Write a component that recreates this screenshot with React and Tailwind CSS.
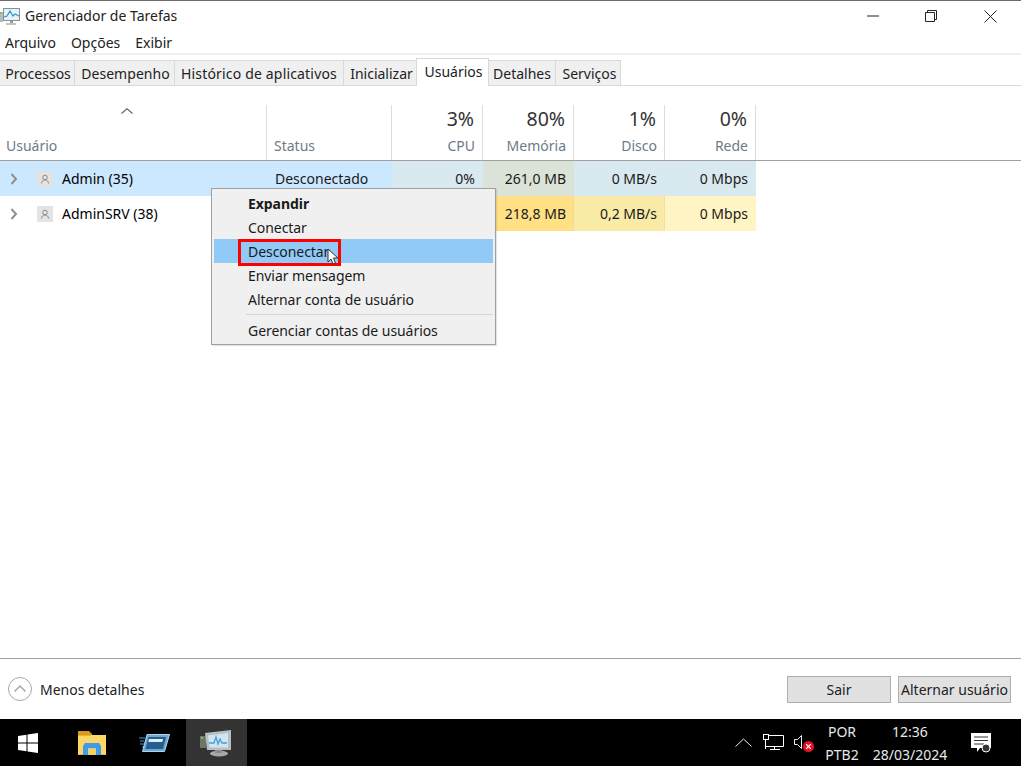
import React from "react";

const tabs = [
  ["Processos", "w-[75px] pl-[2px]"],
  ["Desempenho", "w-[100px] pl-[2px] tracking-[0.05px]"],
  ["Histórico de aplicativos", "w-[169px] tracking-[0.17px]"],
  ["Inicializar", "w-[73px] pl-[3px]"],
];

function UserIcon() {
  return (
    <span className="w-4 h-4 bg-[#e3e3e3] flex items-center justify-center">
      <svg width="10" height="10" viewBox="0 0 10 10" fill="none" stroke="#8a8a8a" strokeWidth="1">
        <circle cx="5" cy="3.5" r="2.3" />
        <path d="M1.5 9.5c0-2 1.5-3.5 3.5-3.5s3.500 1.500 3.500 3.500" />
      </svg>
    </span>
  );
}

function Chevron() {
  return (
    <svg width="8" height="12" viewBox="0 0 8 12" fill="none" stroke="#8f8f8f" strokeWidth="2">
      <path d="M1.500 1l4.500 5-4.500 5" />
    </svg>
  );
}

function HeadCol({ pct, label }) {
  return (
    <div className="w-[91px] border-r border-[#dcdcdc] flex flex-col items-end pr-[7px]">
      <div className="text-[19.5px] leading-[26px] text-[#333] mt-[1px] mr-[1px]">{pct}</div>
      <div className="text-[14px] leading-[20px] text-[#6d7a88] mt-[4px]">{label}</div>
    </div>
  );
}

function Cell({ bg, border, children }) {
  return (
    <div className={`w-[91px] h-full flex items-center justify-end pr-[7px] text-[14px] border-r ${bg} ${border}`}>
      {children}
    </div>
  );
}

function Row({ bg, name, status, cells }) {
  return (
    <div className="h-[35px] flex items-stretch">
      <div className={`w-[267px] flex items-center ${bg}`}>
        <span className="ml-[10px] w-[8px] flex"><Chevron /></span>
        <span className="ml-[19px]"><UserIcon /></span>
        <span className="ml-[9px] text-[14px] text-black">{name}</span>
      </div>
      <div className={`w-[125px] flex items-center pl-[8px] text-[14px] ${bg}`}>{status}</div>
      {cells.map((c, i) => (
        <Cell key={i} bg={c[0]} border={c[1]}>{c[2]}</Cell>
      ))}
    </div>
  );
}

function MenuItem({ children, bold, active }) {
  return (
    <div className={`h-[24px] flex items-center pl-[34px] text-[14px] tracking-[-0.06px] ${bold ? "font-bold" : ""} ${active ? "bg-[#91c9f7]" : ""}`}>
      {children}
    </div>
  );
}

function FolderIcon() {
  return (
    <svg width="28" height="24" viewBox="0 0 28 24">
      <path d="M0 1C0 .4.400 0 1 0h10l3 3v3H0z" fill="#d99a1c" />
      <rect x="0" y="4" width="28" height="20" fill="#fcd667" />
      <rect x="0" y="4" width="13" height="1" fill="#e8b23a" />
      <rect x="0" y="23" width="28" height="1" fill="#e6b53d" />
      <path d="M5 24v-9l2-3h14l2 3v9h-5v-6.500h-8V24z" fill="#3d9be9" />
      <rect x="10" y="17.500" width="8" height="6.500" fill="#f3cf6a" />
    </svg>
  );
}

function ServerIcon() {
  return (
    <svg width="31" height="18" viewBox="0 0 31 18">
      <path d="M0 4h6M1 7h4M1 10h4M3 13h2" stroke="#4f9ad6" strokeWidth="1" />
      <path d="M8 .5h22.500L25.500 17.500H3.500z" fill="#6fa9d0" stroke="#a8d5f0" strokeWidth="1" />
      <path d="M9.500 3H27l-3 12H6.500z" fill="#255d8f" />
      <path d="M10 5h14l-.7 3H9.300z" fill="#dceef9" />
    </svg>
  );
}

function TaskMgrBar() {
  return (
    <svg width="33" height="27" viewBox="0 0 33 27">
      <rect x="0" y="6" width="6" height="12" fill="#6d7468" />
      <rect x="1" y="7" width="2" height="2" fill="#79c257" />
      <ellipse cx="19" cy="23.500" rx="9" ry="3" fill="#a9a9a9" />
      <rect x="15" y="19" width="7" height="4" fill="#8c8c8c" />
      <path d="M5 3l26-3v20H7z" fill="#b9bec1" />
      <path d="M8 5.500l20-2.500v14.500H9.500z" fill="#cfe6f2" />
      <path d="M9 13h5l2-6 2 7 2-5 2 4h5" fill="none" stroke="#4b9fd2" strokeWidth="1.300" />
    </svg>
  );
}

function TaskMgrTitle() {
  return (
    <svg width="20" height="17" viewBox="0 0 20 17">
      <rect x="0" y="4" width="3" height="10" fill="#b9bdb8" />
      <rect x="0" y="4" width="2" height="2" fill="#79c257" />
      <rect x="3" y="0" width="17" height="13" fill="#8b8f92" />
      <rect x="4" y="1" width="15" height="11" fill="#e4f3fb" />
      <path d="M4 9l3-1 3-5 3 5 2-2 4 2" fill="none" stroke="#3c93c9" strokeWidth="1.200" />
      <rect x="10" y="13" width="3" height="2" fill="#9a9a9a" />
      <rect x="6" y="15" width="10" height="2" fill="#c4c4c4" />
    </svg>
  );
}

export default function App() {
  return (
    <div className="w-[1021px] h-[766px] overflow-hidden bg-white flex flex-col relative font-['Noto_Sans','Open_Sans',sans-serif] text-[#1a1a1a]">
      <div className="h-[1px] bg-[#6b6b6b] shrink-0" />
      {/* title bar */}
      <div className="h-[30px] shrink-0 flex items-center">
        <span className="flex mr-[5px]"><TaskMgrTitle /></span>
        <span className="text-[14px] text-[#222] mb-[1px]">Gerenciador de Tarefas</span>
        <div className="ml-auto flex items-center">
          <svg width="12" height="2" viewBox="0 0 12 2" className="mr-[46px]"><path d="M0 1h12" stroke="#222" /></svg>
          <svg width="12" height="12" viewBox="0 0 12 12" fill="none" stroke="#222" className="mr-[47px]">
            <path d="M.5 2.500h9v9h-9zM2.500 2.500v-2h9v9h-2" />
          </svg>
          <svg width="13" height="13" viewBox="0 0 13 13" fill="none" stroke="#222" className="mr-[24px]">
            <path d="M.5.5l12 12M12.500.5l-12 12" />
          </svg>
        </div>
      </div>
      {/* menu */}
      <div className="h-[22px] shrink-0 flex items-center pl-[5px] gap-[15px] text-[14px] text-[#222]">
        <span>Arquivo</span><span>Opções</span><span>Exibir</span>
      </div>
      <div className="h-[2px] bg-[#f0f0f0] shrink-0" />
      {/* tabs */}
      <div className="h-[28px] mt-[3px] shrink-0 flex items-end border-b border-[#d9d9d9]">
        {tabs.map(([t, w]) => (
          <div key={t} className={`${w} h-[25px] bg-[#f0f0f0] border-t border-r border-[#d9d9d9] flex items-center justify-center text-[14px] text-[#222]`}>{t}</div>
        ))}
        <div className="w-[73px] h-[28px] mb-[-1px] bg-white border border-b-0 border-[#d9d9d9] flex items-start pt-[2px] pl-[2px] justify-center text-[14px] text-[#222] ml-[-1px]">Usuários</div>
        <div className="w-[67px] h-[25px] bg-[#f0f0f0] border-t border-r border-[#d9d9d9] flex items-center justify-center text-[14px] text-[#222]">Detalhes</div>
        <div className="w-[65px] h-[25px] bg-[#f0f0f0] border-t border-r border-[#d9d9d9] flex items-center justify-center pl-[3px] text-[14px] text-[#222]">Serviços</div>
      </div>
      {/* table header */}
      <div className="h-[55px] mt-[19px] shrink-0 flex">
        <div className="w-[267px] border-r border-[#dcdcdc] relative flex items-end pl-[6px] pb-[4px] text-[14px] text-[#6d7a88]">
          Usuário
          <svg width="12" height="6" viewBox="0 0 12 6" fill="none" stroke="#5a6b80" strokeWidth="1.200" className="absolute left-[121px] top-[3px]">
            <path d="M.5 5.500L6 .8l5.500 4.700" />
          </svg>
        </div>
        <div className="w-[125px] border-r border-[#dcdcdc] flex items-end pl-[7px] pb-[4px] text-[14px] text-[#6d7a88]">Status</div>
        <HeadCol pct="3%" label="CPU" />
        <HeadCol pct="80%" label="Memória" />
        <HeadCol pct="1%" label="Disco" />
        <HeadCol pct="0%" label="Rede" />
      </div>
      <div className="h-[1px] bg-[#a0a0a0] shrink-0" />
      {/* rows */}
      <div className="flex-1 min-h-0">
        <Row
          bg="bg-[#cce8ff]"
          name="Admin (35)"
          status="Desconectado"
          cells={[
            ["bg-[#d8e9ef]", "border-[#d8e9ef]", "0%"],
            ["bg-[#dbe3d8]", "border-[#dbe3d8]", "261,0 MB"],
            ["bg-[#d8e9ef]", "border-[#d8e9ef]", "0 MB/s"],
            ["bg-[#d8e9ef]", "border-[#d8e9ef]", "0 Mbps"],
          ]}
        />
        <Row
          bg="bg-white"
          name="AdminSRV (38)"
          status=""
          cells={[
            ["bg-[#fff4c4]", "border-[#f3e6a8]", ""],
            ["bg-[#ffe084]", "border-[#f1d893]", "218,8 MB"],
            ["bg-[#f9eba6]", "border-[#f1e0a0]", "0,2 MB/s"],
            ["bg-[#fff4c4]", "border-[#fff4c4]", "0 Mbps"],
          ]}
        />
      </div>
      {/* footer */}
      <div className="h-[61px] shrink-0 border-t border-[#a0a0a0] flex items-center">
        <svg width="24" height="24" viewBox="0 0 24 24" fill="none" className="ml-[8px]">
          <circle cx="12" cy="12" r="11.500" stroke="#a8a8a8" />
          <path d="M6.500 14.500L12 9l5.500 5.500" stroke="#a8a8a8" strokeWidth="1.500" />
        </svg>
        <span className="ml-[8px] text-[14px] text-[#222]">Menos detalhes</span>
        <div className="ml-auto flex gap-[7px] mr-[10px]">
          <button className="w-[104px] h-[27px] bg-[#e1e1e1] border border-[#adadad] text-[14px] text-[#222]">Sair</button>
          <button className="w-[113px] h-[27px] bg-[#e1e1e1] border border-[#adadad] text-[14px] text-[#222]">Alternar usuário</button>
        </div>
      </div>
      {/* taskbar */}
      <div className="h-[47px] shrink-0 bg-black flex items-center text-white">
        <svg width="20" height="20" viewBox="0 0 20 20" fill="#fff" className="ml-[18px]">
          <path d="M0 3l8.500-1.300V9.500H0zM9.500 1.500L20 0v9.500H9.500zM0 10.500h8.500v7.800L0 17zM9.500 10.500H20V20L9.500 18.500z" />
        </svg>
        <span className="ml-[40px] flex"><FolderIcon /></span>
        <span className="ml-[33px] flex"><ServerIcon /></span>
        <div className="ml-[16px] w-[61px] h-full bg-[#333333] flex items-center justify-center pt-[2px]"><TaskMgrBar /></div>
        <div className="ml-auto flex items-center h-full">
          <svg width="17" height="9" viewBox="0 0 17 9" fill="none" stroke="#e8e8e8" className="mr-[11px]">
            <path d="M.5 8.500L8.500 1l8 7.500" />
          </svg>
          <svg width="21" height="17" viewBox="0 0 21 17" fill="none" stroke="#fff" className="mr-[10px]">
            <path d="M2.500 1.500h18v11h-18zM2.500 6v9M11.500 12.500v3M7 15.500h10" />
            <rect x=".5" y=".5" width="5" height="5" fill="#000" />
          </svg>
          <span className="relative w-[22px] h-[20px] mr-[9px]">
            <svg width="9" height="14" viewBox="0 0 9 14" fill="none" stroke="#eee" className="absolute left-0 top-[2px]">
              <path d="M.5 4.500h3l4-4v13l-4-4h-3z" />
            </svg>
            <span className="absolute left-[9px] top-[8px] w-[11px] h-[11px] rounded-full bg-[#e81123] flex items-center justify-center">
              <svg width="5" height="5" viewBox="0 0 5 5" stroke="#fff" strokeWidth="1.200"><path d="M0 0l5 5M5 0L0 5" /></svg>
            </span>
          </span>
          <div className="w-[34px] mr-[12px] flex flex-col items-center text-[14px] leading-[23px] text-[#e8e8e8]">
            <span>POR</span>
            <span>PTB2</span>
          </div>
          <div className="w-[78px] flex flex-col items-center text-[14px] leading-[23px] text-[#e8e8e8]">
            <span>12:36</span>
            <span>28/03/2024</span>
          </div>
          <svg width="21" height="20" viewBox="0 0 21 20" className="ml-[22px] mr-[29px]">
            <path d="M0 0h20v15H9l-3 4v-4H0z" fill="#fff" />
            <path d="M3 4h14M3 7.500h14M3 11h10" stroke="#333" />
            <circle cx="15" cy="15" r="4" fill="#333" stroke="#fff" />
          </svg>
        </div>
      </div>
      {/* context menu */}
      <div className="absolute left-[211px] top-[188px] w-[285px] h-[157px] bg-[#f0f0f0] border border-[#a0a0a0] p-[2px] text-[14px] text-[#1a1a1a] shadow-[1px_1px_1px_rgba(0,0,0,0.1)]">
        <MenuItem bold>Expandir</MenuItem>
        <MenuItem>Conectar</MenuItem>
        <MenuItem active>Desconectar</MenuItem>
        <MenuItem>Enviar mensagem</MenuItem>
        <MenuItem>Alternar conta de usuário</MenuItem>
        <div className="h-[1px] bg-[#d4d4d4] ml-[32px] mt-[3px] mb-[3px]" />
        <MenuItem>Gerenciar contas de usuários</MenuItem>
      </div>
      <div className="absolute left-[238px] top-[239px] w-[103px] h-[27px] border-[3px] border-[#ff0000]" />
      <svg width="14" height="18" viewBox="0 0 14 18" className="absolute left-[327px] top-[248px]">
        <path d="M1 1v13l3-3 2 5 2.500-1-2-5h4.500z" fill="#fff" stroke="#333" strokeWidth="1" />
      </svg>
    </div>
  );
}
